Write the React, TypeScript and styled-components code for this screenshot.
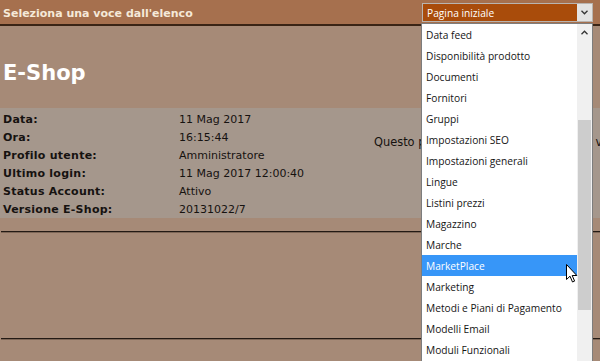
import React from 'react';
import styled, { createGlobalStyle } from 'styled-components';

const Global = createGlobalStyle`
  html, body { margin: 0; padding: 0; }
  body {
    background: #a68a77;
    width: 600px;
    height: 361px;
    overflow: hidden;
    font-family: "DejaVu Sans", Verdana, sans-serif;
  }
`;

const Page = styled.div`
  position: relative;
  width: 600px;
  height: 361px;
  overflow: hidden;
  background: #a68a77;
`;

const TopBar = styled.header`
  height: 24px;
  display: flex;
  align-items: center;
  justify-content: space-between;
  padding: 0 7px 0 3px;
  background: #a6704e;
  border-bottom: 2px solid #3a2415;
`;

const BarTitle = styled.div`
  font-family: "DejaVu Sans", Verdana, sans-serif;
  font-weight: bold;
  font-size: 11px;
  color: #f5e9d9;
  padding-top: 2px;
`;

const SelectBox = styled.div`
  position: relative;
  box-sizing: border-box;
  width: 171px;
  height: 19px;
  margin-top: 1px;
  border: 1px solid #b9b4b0;
  background: #a94c0b;
  display: flex;
  align-items: center;
`;

const SelectValue = styled.div`
  flex: 1;
  padding-left: 4px;
  font-family: "Open Sans", sans-serif;
  font-size: 10.2px;
  color: #ffffff;
`;

const SelectButton = styled.div`
  width: 15px;
  height: 100%;
  background: #e3e3e3;
  display: flex;
  align-items: center;
  justify-content: center;
`;

const ListPanel = styled.div`
  position: absolute;
  top: 19px;
  left: -2px;
  width: 172px;
  height: 360px;
  box-sizing: border-box;
  background: #ffffff;
  border: 1px solid #7d7d7d;
  z-index: 10;
`;

const ListItems = styled.ul`
  list-style: none;
  margin: 0;
  padding: 0;
  width: 155px;
`;

const ListItem = styled.li<{ $active?: boolean }>`
  height: 20px;
  padding: 1px 0 0 4px;
  line-height: 21px;
  font-family: "Open Sans", sans-serif;
  font-size: 10.2px;
  white-space: nowrap;
  color: ${p => (p.$active ? '#ffffff' : '#151515')};
  background: ${p => (p.$active ? '#3796f8' : 'transparent')};
`;

const ScrollTrack = styled.div`
  position: absolute;
  top: 0;
  right: 0;
  bottom: 0;
  width: 15px;
  background: #f0f0f0;
`;

const ScrollArrow = styled.div`
  height: 17px;
  display: flex;
  align-items: center;
  justify-content: center;
`;

const ScrollThumb = styled.div`
  position: absolute;
  top: 96px;
  left: 1px;
  right: 1px;
  height: 190px;
  background: #cdcdcd;
`;

const Cursor = styled.svg`
  position: absolute;
  left: 566px;
  top: 264px;
  z-index: 20;
`;

const Main = styled.main`
  display: flex;
  flex-direction: column;
`;

const Heading = styled.h1`
  margin: 37px 0 24px 3px;
  font-family: "DejaVu Sans", Verdana, sans-serif;
  font-weight: bold;
  font-size: 21px;
  line-height: 21px;
  color: #ffffff;
`;

const InfoPanel = styled.section`
  display: flex;
  height: 110px;
  box-sizing: border-box;
  padding: 2px 0 0 3px;
  background: #a5978c;
`;

const InfoGrid = styled.dl`
  margin: 0;
  display: grid;
  grid-template-columns: 176px 180px;
  grid-auto-rows: 18px;
  align-items: center;
`;

const Label = styled.dt`
  font-weight: bold;
  font-size: 11px;
  letter-spacing: 0.25px;
  color: #161210;
`;

const Value = styled.dd`
  margin: 0;
  font-size: 11px;
  color: #161210;
  white-space: nowrap;
`;

const Note = styled.div`
  flex: 1;
  min-width: 0;
  padding: 23px 0 0 15px;
  font-size: 11.4px;
  line-height: 18px;
  color: #161210;
  white-space: nowrap;
`;

const Divider = styled.hr<{ $gap: number }>`
  margin: ${p => p.$gap}px 0 0 1px;
  height: 0;
  border: none;
  border-top: 1px solid #231a14;
  border-bottom: 1px solid #7d6656;
`;

const items = [
  'Data feed',
  'Disponibilità prodotto',
  'Documenti',
  'Fornitori',
  'Gruppi',
  'Impostazioni SEO',
  'Impostazioni generali',
  'Lingue',
  'Listini prezzi',
  'Magazzino',
  'Marche',
  'MarketPlace',
  'Marketing',
  'Metodi e Piani di Pagamento',
  'Modelli Email',
  'Moduli Funzionali',
];

const info: [string, string][] = [
  ['Data:', '11 Mag 2017'],
  ['Ora:', '16:15:44'],
  ['Profilo utente:', 'Amministratore'],
  ['Ultimo login:', '11 Mag 2017 12:00:40'],
  ['Status Account:', 'Attivo'],
  ['Versione E-Shop:', '20131022/7'],
];

export default function App() {
  return (
    <Page>
      <Global />
      <TopBar>
        <BarTitle>Seleziona una voce dall'elenco</BarTitle>
        <SelectBox>
          <SelectValue>Pagina iniziale</SelectValue>
          <SelectButton>
            <svg width="7" height="5" viewBox="0 0 7 5">
              <path d="M0.5 0.8 L3.5 3.8 L6.5 0.8" fill="none" stroke="#333" strokeWidth="1.3" />
            </svg>
          </SelectButton>
          <ListPanel>
            <ListItems>
              {items.map(t => (
                <ListItem key={t} $active={t === 'MarketPlace'}>
                  {t}
                </ListItem>
              ))}
            </ListItems>
            <ScrollTrack>
              <ScrollArrow>
                <svg width="7" height="5" viewBox="0 0 7 5">
                  <path d="M0.5 4.2 L3.5 1.2 L6.5 4.2" fill="none" stroke="#333" strokeWidth="1.3" />
                </svg>
              </ScrollArrow>
              <ScrollThumb />
            </ScrollTrack>
          </ListPanel>
        </SelectBox>
      </TopBar>
      <Main>
        <Heading>E-Shop</Heading>
        <InfoPanel>
          <InfoGrid>
            {info.map(([l, v]) => (
              <React.Fragment key={l}>
                <Label>{l}</Label>
                <Value>{v}</Value>
              </React.Fragment>
            ))}
          </InfoGrid>
          <Note>Questo pannello di controllo utilizza la versione più recente</Note>
        </InfoPanel>
        <Divider $gap={13} />
        <Divider $gap={105} />
      </Main>
      <Cursor width="12" height="19" viewBox="0 0 12 19">
        <path d="M0.5 0.5 L0.5 15.5 L4 12.2 L6.5 18 L8.6 17.1 L6.2 11.5 L10.8 11.5 Z" fill="#fff" stroke="#000" strokeWidth="1" strokeLinejoin="round" />
      </Cursor>
    </Page>
  );
}
